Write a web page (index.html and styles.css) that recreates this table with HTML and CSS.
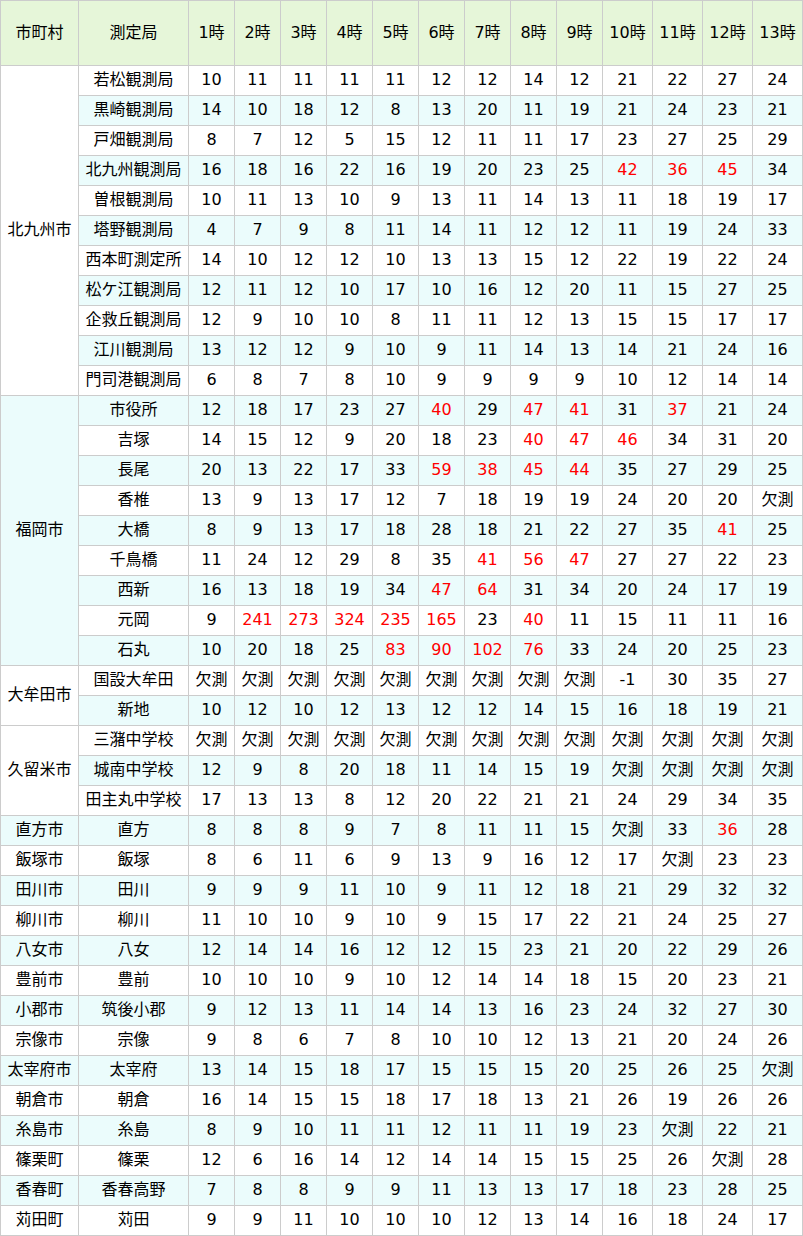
FILE: index.html
```html
<!DOCTYPE html>
<html lang="ja">
<head>
<meta charset="utf-8">
<title>測定結果</title>
<link rel="stylesheet" href="styles.css">
</head>
<body>
<table class="data">
<colgroup>
<col class="c-city"><col class="c-st">
<col class="c-h"><col class="c-h"><col class="c-h"><col class="c-h"><col class="c-h"><col class="c-h"><col class="c-h"><col class="c-h"><col class="c-h">
<col class="c-w"><col class="c-w"><col class="c-w"><col class="c-w">
</colgroup>
<thead>
<tr><th>市町村</th><th>測定局</th><th>1時</th><th>2時</th><th>3時</th><th>4時</th><th>5時</th><th>6時</th><th>7時</th><th>8時</th><th>9時</th><th>10時</th><th>11時</th><th>12時</th><th>13時</th></tr>
</thead>
<tbody>
<tr><td rowspan="11">北九州市</td><td>若松観測局</td><td>10</td><td>11</td><td>11</td><td>11</td><td>11</td><td>12</td><td>12</td><td>14</td><td>12</td><td>21</td><td>22</td><td>27</td><td>24</td></tr>
<tr><td>黒崎観測局</td><td>14</td><td>10</td><td>18</td><td>12</td><td>8</td><td>13</td><td>20</td><td>11</td><td>19</td><td>21</td><td>24</td><td>23</td><td>21</td></tr>
<tr><td>戸畑観測局</td><td>8</td><td>7</td><td>12</td><td>5</td><td>15</td><td>12</td><td>11</td><td>11</td><td>17</td><td>23</td><td>27</td><td>25</td><td>29</td></tr>
<tr><td>北九州観測局</td><td>16</td><td>18</td><td>16</td><td>22</td><td>16</td><td>19</td><td>20</td><td>23</td><td>25</td><td class="r">42</td><td class="r">36</td><td class="r">45</td><td>34</td></tr>
<tr><td>曽根観測局</td><td>10</td><td>11</td><td>13</td><td>10</td><td>9</td><td>13</td><td>11</td><td>14</td><td>13</td><td>11</td><td>18</td><td>19</td><td>17</td></tr>
<tr><td>塔野観測局</td><td>4</td><td>7</td><td>9</td><td>8</td><td>11</td><td>14</td><td>11</td><td>12</td><td>12</td><td>11</td><td>19</td><td>24</td><td>33</td></tr>
<tr><td>西本町測定所</td><td>14</td><td>10</td><td>12</td><td>12</td><td>10</td><td>13</td><td>13</td><td>15</td><td>12</td><td>22</td><td>19</td><td>22</td><td>24</td></tr>
<tr><td>松ケ江観測局</td><td>12</td><td>11</td><td>12</td><td>10</td><td>17</td><td>10</td><td>16</td><td>12</td><td>20</td><td>11</td><td>15</td><td>27</td><td>25</td></tr>
<tr><td>企救丘観測局</td><td>12</td><td>9</td><td>10</td><td>10</td><td>8</td><td>11</td><td>11</td><td>12</td><td>13</td><td>15</td><td>15</td><td>17</td><td>17</td></tr>
<tr><td>江川観測局</td><td>13</td><td>12</td><td>12</td><td>9</td><td>10</td><td>9</td><td>11</td><td>14</td><td>13</td><td>14</td><td>21</td><td>24</td><td>16</td></tr>
<tr><td>門司港観測局</td><td>6</td><td>8</td><td>7</td><td>8</td><td>10</td><td>9</td><td>9</td><td>9</td><td>9</td><td>10</td><td>12</td><td>14</td><td>14</td></tr>
<tr><td rowspan="9">福岡市</td><td>市役所</td><td>12</td><td>18</td><td>17</td><td>23</td><td>27</td><td class="r">40</td><td>29</td><td class="r">47</td><td class="r">41</td><td>31</td><td class="r">37</td><td>21</td><td>24</td></tr>
<tr><td>吉塚</td><td>14</td><td>15</td><td>12</td><td>9</td><td>20</td><td>18</td><td>23</td><td class="r">40</td><td class="r">47</td><td class="r">46</td><td>34</td><td>31</td><td>20</td></tr>
<tr><td>長尾</td><td>20</td><td>13</td><td>22</td><td>17</td><td>33</td><td class="r">59</td><td class="r">38</td><td class="r">45</td><td class="r">44</td><td>35</td><td>27</td><td>29</td><td>25</td></tr>
<tr><td>香椎</td><td>13</td><td>9</td><td>13</td><td>17</td><td>12</td><td>7</td><td>18</td><td>19</td><td>19</td><td>24</td><td>20</td><td>20</td><td>欠測</td></tr>
<tr><td>大橋</td><td>8</td><td>9</td><td>13</td><td>17</td><td>18</td><td>28</td><td>18</td><td>21</td><td>22</td><td>27</td><td>35</td><td class="r">41</td><td>25</td></tr>
<tr><td>千鳥橋</td><td>11</td><td>24</td><td>12</td><td>29</td><td>8</td><td>35</td><td class="r">41</td><td class="r">56</td><td class="r">47</td><td>27</td><td>27</td><td>22</td><td>23</td></tr>
<tr><td>西新</td><td>16</td><td>13</td><td>18</td><td>19</td><td>34</td><td class="r">47</td><td class="r">64</td><td>31</td><td>34</td><td>20</td><td>24</td><td>17</td><td>19</td></tr>
<tr><td>元岡</td><td>9</td><td class="r">241</td><td class="r">273</td><td class="r">324</td><td class="r">235</td><td class="r">165</td><td>23</td><td class="r">40</td><td>11</td><td>15</td><td>11</td><td>11</td><td>16</td></tr>
<tr><td>石丸</td><td>10</td><td>20</td><td>18</td><td>25</td><td class="r">83</td><td class="r">90</td><td class="r">102</td><td class="r">76</td><td>33</td><td>24</td><td>20</td><td>25</td><td>23</td></tr>
<tr><td rowspan="2">大牟田市</td><td>国設大牟田</td><td>欠測</td><td>欠測</td><td>欠測</td><td>欠測</td><td>欠測</td><td>欠測</td><td>欠測</td><td>欠測</td><td>欠測</td><td>-1</td><td>30</td><td>35</td><td>27</td></tr>
<tr><td>新地</td><td>10</td><td>12</td><td>10</td><td>12</td><td>13</td><td>12</td><td>12</td><td>14</td><td>15</td><td>16</td><td>18</td><td>19</td><td>21</td></tr>
<tr><td rowspan="3">久留米市</td><td>三潴中学校</td><td>欠測</td><td>欠測</td><td>欠測</td><td>欠測</td><td>欠測</td><td>欠測</td><td>欠測</td><td>欠測</td><td>欠測</td><td>欠測</td><td>欠測</td><td>欠測</td><td>欠測</td></tr>
<tr><td>城南中学校</td><td>12</td><td>9</td><td>8</td><td>20</td><td>18</td><td>11</td><td>14</td><td>15</td><td>19</td><td>欠測</td><td>欠測</td><td>欠測</td><td>欠測</td></tr>
<tr><td>田主丸中学校</td><td>17</td><td>13</td><td>13</td><td>8</td><td>12</td><td>20</td><td>22</td><td>21</td><td>21</td><td>24</td><td>29</td><td>34</td><td>35</td></tr>
<tr><td>直方市</td><td>直方</td><td>8</td><td>8</td><td>8</td><td>9</td><td>7</td><td>8</td><td>11</td><td>11</td><td>15</td><td>欠測</td><td>33</td><td class="r">36</td><td>28</td></tr>
<tr><td>飯塚市</td><td>飯塚</td><td>8</td><td>6</td><td>11</td><td>6</td><td>9</td><td>13</td><td>9</td><td>16</td><td>12</td><td>17</td><td>欠測</td><td>23</td><td>23</td></tr>
<tr><td>田川市</td><td>田川</td><td>9</td><td>9</td><td>9</td><td>11</td><td>10</td><td>9</td><td>11</td><td>12</td><td>18</td><td>21</td><td>29</td><td>32</td><td>32</td></tr>
<tr><td>柳川市</td><td>柳川</td><td>11</td><td>10</td><td>10</td><td>9</td><td>10</td><td>9</td><td>15</td><td>17</td><td>22</td><td>21</td><td>24</td><td>25</td><td>27</td></tr>
<tr><td>八女市</td><td>八女</td><td>12</td><td>14</td><td>14</td><td>16</td><td>12</td><td>12</td><td>15</td><td>23</td><td>21</td><td>20</td><td>22</td><td>29</td><td>26</td></tr>
<tr><td>豊前市</td><td>豊前</td><td>10</td><td>10</td><td>10</td><td>9</td><td>10</td><td>12</td><td>14</td><td>14</td><td>18</td><td>15</td><td>20</td><td>23</td><td>21</td></tr>
<tr><td>小郡市</td><td>筑後小郡</td><td>9</td><td>12</td><td>13</td><td>11</td><td>14</td><td>14</td><td>13</td><td>16</td><td>23</td><td>24</td><td>32</td><td>27</td><td>30</td></tr>
<tr><td>宗像市</td><td>宗像</td><td>9</td><td>8</td><td>6</td><td>7</td><td>8</td><td>10</td><td>10</td><td>12</td><td>13</td><td>21</td><td>20</td><td>24</td><td>26</td></tr>
<tr><td>太宰府市</td><td>太宰府</td><td>13</td><td>14</td><td>15</td><td>18</td><td>17</td><td>15</td><td>15</td><td>15</td><td>20</td><td>25</td><td>26</td><td>25</td><td>欠測</td></tr>
<tr><td>朝倉市</td><td>朝倉</td><td>16</td><td>14</td><td>15</td><td>15</td><td>18</td><td>17</td><td>18</td><td>13</td><td>21</td><td>26</td><td>19</td><td>26</td><td>26</td></tr>
<tr><td>糸島市</td><td>糸島</td><td>8</td><td>9</td><td>10</td><td>11</td><td>11</td><td>12</td><td>11</td><td>11</td><td>19</td><td>23</td><td>欠測</td><td>22</td><td>21</td></tr>
<tr><td>篠栗町</td><td>篠栗</td><td>12</td><td>6</td><td>16</td><td>14</td><td>12</td><td>14</td><td>14</td><td>15</td><td>15</td><td>25</td><td>26</td><td>欠測</td><td>28</td></tr>
<tr><td>香春町</td><td>香春高野</td><td>7</td><td>8</td><td>8</td><td>9</td><td>9</td><td>11</td><td>13</td><td>13</td><td>17</td><td>18</td><td>23</td><td>28</td><td>25</td></tr>
<tr><td>苅田町</td><td>苅田</td><td>9</td><td>9</td><td>11</td><td>10</td><td>10</td><td>10</td><td>12</td><td>13</td><td>14</td><td>16</td><td>18</td><td>24</td><td>17</td></tr>
</tbody>
</table>
</body>
</html>
```
FILE: styles.css
```css
html, body {
  margin: 0;
  padding: 0;
  background: #ffffff;
}
.data {
  border-collapse: collapse;
  table-layout: fixed;
  width: 803px;
  font-family: "DejaVu Sans", "Noto Sans CJK JP", sans-serif;
  font-size: 16px;
  line-height: 18px;
  color: #000000;
}
.c-city { width: 78px; }
.c-st { width: 110px; }
.c-h { width: 46px; }
.c-w { width: 50px; }
.data th,
.data td {
  border: 1px solid #cccccc;
  padding: 0 0 1px;
  text-align: center;
  vertical-align: middle;
  white-space: nowrap;
  font-weight: normal;
}
.data thead tr {
  height: 65px;
  background: #e6f6d9;
}
.data tbody tr {
  height: 30px;
}
.data tbody tr:nth-child(even) {
  background: #ebfcfc;
}
.data td.r {
  color: #ff0000;
}
```
